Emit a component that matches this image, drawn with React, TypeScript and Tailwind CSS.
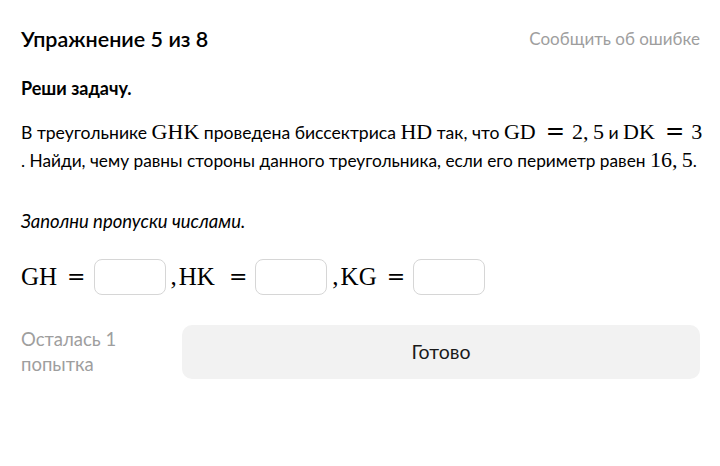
function M({ children }: { children: React.ReactNode }) {
  return <span className="font-['Liberation_Serif',serif] text-[22px]">{children}</span>;
}

function Eq({ className = "ml-[10px] mr-[7px] text-[23px]" }: { className?: string }) {
  return <span className={`inline-block font-['DejaVu_Sans',sans-serif] ${className}`}>=</span>;
}

function Box() {
  return <span className="inline-block h-[36px] w-[72px] rounded-[8px] border border-[#d6d6d6] bg-white" />;
}

export default function App() {
  return (
    <div className="min-h-[466px] w-[720px] bg-white pl-[21px] pr-[20px] pt-[24px] font-['Lato',sans-serif] text-[#000]">
      <div className="flex items-center justify-between">
        <h1 className="text-[21.5px] font-semibold leading-[30px]">Упражнение 5 из 8</h1>
        <span className="text-[17px] leading-[30px] text-[#9e9e9e]">Сообщить об ошибке</span>
      </div>

      <p className="mt-[22px] text-[18px] font-bold leading-[24px]">Реши задачу.</p>

      <p className="mt-[18px] whitespace-nowrap text-[17.3px] leading-[27px]">
        <span className="text-[17.6px]">
          В треугольнике <M>GHK</M> проведена биссектриса <M>HD</M> так, что <M>GD</M>
          <Eq />
          <M>2,&thinsp;5</M> и <M>DK</M>
          <Eq />
          <M>3</M>
        </span>
        <br />. Найди, чему равны стороны данного треугольника, если его периметр равен <M>16,&thinsp;5</M>.
      </p>

      <p className="mt-[34px] text-[18.5px] italic leading-[27px]">Заполни пропуски числами.</p>

      <div className="mt-[23px] flex items-center font-['Liberation_Serif',serif] text-[25px]">
        <span>GH</span>
        <Eq className="ml-[10px] mr-[8px] text-[22px]" />
        <Box />
        <span className="ml-[5px]">,</span>
        <span className="ml-[2px] pr-[4px]">HK</span>
        <Eq className="ml-[10px] mr-[8px] text-[22px]" />
        <Box />
        <span className="ml-[5px]">,</span>
        <span className="ml-[2px]">KG</span>
        <Eq className="ml-[10px] mr-[8px] text-[22px]" />
        <Box />
      </div>

      <div className="mt-[29px] flex items-center gap-[41px]">
        <div className="w-[120px] text-[18.5px] leading-[25px] text-[#9e9e9e]">
          Осталась 1<br />попытка
        </div>
        <button className="flex h-[54px] flex-1 items-center justify-center rounded-[10px] bg-[#f2f2f2] text-[19.5px] text-[#1a1a1a]">
          Готово
        </button>
      </div>
    </div>
  );
}
